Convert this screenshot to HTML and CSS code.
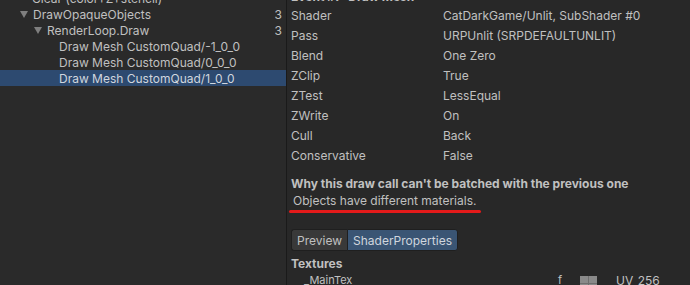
FILE: index.html
```html
<!DOCTYPE html>
<html>
<head>
<meta charset="utf-8">
<link rel="stylesheet" href="styles.css">
</head>
<body>
<div class="app">
  <div class="tree">
    <div class="row lvl0"><span class="label">Clear (color+Z+stencil)</span></div>
    <div class="row lvl0"><span class="tri"></span><span class="label">DrawOpaqueObjects</span><span class="count">3</span></div>
    <div class="row lvl1"><span class="tri"></span><span class="label">RenderLoop.Draw</span><span class="count">3</span></div>
    <div class="row lvl2"><span class="label">Draw Mesh CustomQuad/-1_0_0</span></div>
    <div class="row lvl2"><span class="label">Draw Mesh CustomQuad/0_0_0</span></div>
    <div class="row lvl2 selected"><span class="label">Draw Mesh CustomQuad/1_0_0</span></div>
  </div>
  <div class="divider"></div>
  <div class="details">
    <div class="header">Event #7: Draw Mesh</div>
    <div class="props">
      <div class="prop"><span class="k">Shader</span><span class="v">CatDarkGame/Unlit, SubShader #0</span></div>
      <div class="prop"><span class="k">Pass</span><span class="v">URPUnlit (SRPDEFAULTUNLIT)</span></div>
      <div class="prop"><span class="k">Blend</span><span class="v">One Zero</span></div>
      <div class="prop"><span class="k">ZClip</span><span class="v">True</span></div>
      <div class="prop"><span class="k">ZTest</span><span class="v">LessEqual</span></div>
      <div class="prop"><span class="k">ZWrite</span><span class="v">On</span></div>
      <div class="prop"><span class="k">Cull</span><span class="v">Back</span></div>
      <div class="prop"><span class="k">Conservative</span><span class="v">False</span></div>
    </div>
    <div class="why">Why this draw call can't be batched with the previous one</div>
    <div class="reason">Objects have different materials.<span class="mark"></span></div>
    <div class="tabs">
      <div class="tab">Preview</div>
      <div class="tab active">ShaderProperties</div>
    </div>
    <div class="section">Textures</div>
    <div class="texrow">
      <span class="tname">_MainTex</span>
      <span class="tf">f</span>
      <span class="thumb"></span>
      <span class="tuv">UV_256</span>
    </div>
  </div>
</div>
</body>
</html>
```
FILE: styles.css
```css
html, body {
  margin: 0;
  padding: 0;
  background: #282828;
  overflow: hidden;
}
body {
  font-family: Inter, "Noto Sans", sans-serif;
  font-size: 12px;
  color: #c0c0c0;
}
.app {
  display: flex;
  width: 690px;
  height: 285px;
  overflow: hidden;
}
.tree {
  width: 286px;
  flex: none;
  background: #2a2a2a;
  margin-top: -10px;
}
.row {
  height: 16px;
  display: flex;
  align-items: center;
  position: relative;
  padding-right: 4px;
}
.row .label {
  white-space: nowrap;
}
.row .count {
  margin-left: auto;
}
.lvl0 { padding-left: 20px; }
.row.lvl0:first-child { padding-left: 32px; }
.lvl1 { padding-left: 34px; }
.lvl2 { padding-left: 59px; }
.tri {
  width: 0;
  height: 0;
  border-left: 4px solid transparent;
  border-right: 4px solid transparent;
  border-top: 7px solid #7f7f7f;
  margin-right: 5px;
  margin-top: 1px;
}
.selected {
  background: #2d4a70;
  color: #d0d6de;
}
.divider {
  width: 1px;
  flex: none;
  background: #1a1a1a;
}
.details {
  flex: 1;
  padding-left: 4px;
  background: #282828;
}
.header {
  font-weight: 700;
  height: 16px;
  line-height: 16px;
  margin-top: -11px;
}
.prop {
  height: 20px;
  display: flex;
  align-items: center;
}
.prop .k {
  width: 152px;
  flex: none;
}
.why {
  margin-top: 11px;
  font-weight: 700;
  height: 16px;
  line-height: 16px;
}
.reason {
  position: relative;
  height: 16px;
  line-height: 16px;
  margin-top: 1px;
  padding-left: 2px;
}
.mark {
  position: absolute;
  left: -2px;
  top: 17px;
  width: 192px;
  height: 3px;
  border-radius: 2px;
  background: #e41a1a;
}
.tabs {
  display: flex;
  margin-top: 20px;
  height: 22px;
}
.tab {
  display: flex;
  align-items: center;
  padding: 0 5px;
  background: #393939;
  border: 1px solid #1f1f1f;
  border-right: none;
  font-size: 12px;
}
.tab:first-child {
  border-radius: 3px 0 0 3px;
}
.tab.active {
  background: #3a5574;
  border-right: 1px solid #1f1f1f;
  border-radius: 0 3px 3px 0;
  color: #d0d6de;
}
.section {
  margin-top: 5px;
  font-weight: 700;
  height: 16px;
  line-height: 16px;
}
.texrow {
  display: flex;
  align-items: center;
  height: 16px;
  font-size: 11px;
}
.tname {
  padding-left: 13px;
  width: 254px;
}
.tf {
  width: 22px;
}
.thumb {
  width: 17px;
  height: 14px;
  margin-top: 5px;
  background:
    linear-gradient(#6e6e6e, #6e6e6e) 8px 0 / 1px 100% no-repeat,
    linear-gradient(#6e6e6e, #6e6e6e) 0 7px / 100% 1px no-repeat,
    #8a8a8a;
}
.tuv {
  margin-left: 19px;
  font-size: 12px;
}
```
